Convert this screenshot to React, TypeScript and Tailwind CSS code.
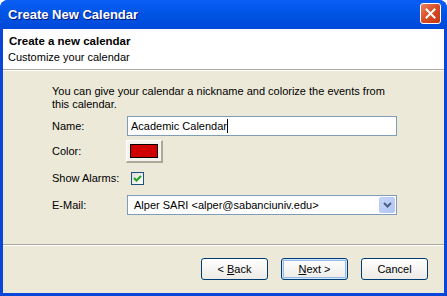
import React from 'react';

const font = { fontFamily: '"Liberation Sans", Arial, sans-serif' };

const XpButton: React.FC<{ children: React.ReactNode; primary?: boolean }> = ({ children, primary }) => (
  <button
    className={
      primary
        ? 'w-[67px] h-[22px] rounded-[3px] border border-[#003C74] bg-gradient-to-b from-[#FFFFFF] to-[#ECEBE6] text-[11px] text-black shadow-[inset_0_0_0_1px_#CEE7FF,inset_0_0_0_2px_#98B8EA]'
        : 'w-[67px] h-[22px] rounded-[3px] border border-[#003C74] bg-gradient-to-b from-[#FFFFFF] to-[#ECEBE6] text-[11px] text-black'
    }
  >
    {children}
  </button>
);

const App: React.FC = () => {
  return (
    <div className="w-[447px] h-[296px] flex flex-col bg-[#0A46D8] rounded-t-[8px] overflow-hidden" style={font}>
      {/* Title bar */}
      <div className="h-[29px] flex items-center justify-between pl-[8px] pr-[6px] bg-gradient-to-b from-[#0A5EF6] via-[#0054E3] to-[#0048DA]">
        <span className="text-white text-[13px] font-bold mt-[1px] [text-shadow:1px_1px_0_#0A1883]">Create New Calendar</span>
        <div className="w-[21px] h-[21px] rounded-[3px] border border-white bg-gradient-to-br from-[#E8815F] via-[#D84A22] to-[#C23A14] flex items-center justify-center mb-[3px]">
          <svg width="11" height="11" viewBox="0 0 11 11">
            <path d="M1.5 1.5 L9.5 9.5 M9.5 1.5 L1.5 9.5" stroke="white" strokeWidth="2" strokeLinecap="square" />
          </svg>
        </div>
      </div>

      <div className="flex-1 mx-[3px] mb-[3px] bg-[#ECE9D8] flex flex-col text-[11px] text-black">
        {/* Header */}
        <div className="h-[41px] bg-white pl-[6px] pt-[6px] border-b border-[#ACA899]">
          <div className="font-bold leading-[13px] text-[11.5px]">Create a new calendar</div>
          <div className="leading-[13px] mt-[3px] -ml-[1px]">Customize your calendar</div>
        </div>
        <div className="h-[1px] bg-white" />

        {/* Body */}
        <div className="flex-1 pl-[49px] pt-[14px]">
          <p className="w-[340px] leading-[13px]">
            You can give your calendar a nickname and colorize the events from this calendar.
          </p>

          <div className="mt-[5px] h-[20px] flex items-center">
            <span className="w-[75px]">Name:</span>
            <div className="w-[270px] h-[20px] border border-[#7F9DB9] bg-white flex items-center pl-[3px]">
              Academic Calendar<span className="w-[1px] h-[14px] bg-black" />
            </div>
          </div>

          <div className="mt-[4px] h-[23px] flex items-center">
            <span className="w-[74px]">Color:</span>
            <div className="w-[37px] h-[23px] bg-[#F4F3EE] border-t border-l border-white border-r-2 border-b-2 border-r-[#ACA899] border-b-[#ACA899] flex items-center justify-center">
              <div className="w-[28px] h-[14px] bg-[#D00000] border border-black" />
            </div>
          </div>

          <div className="mt-[5px] h-[21px] flex items-center">
            <span className="w-[79px]">Show Alarms:</span>
            <div className="w-[13px] h-[13px] border border-[#1C5180] bg-gradient-to-br from-[#DCDCD7] to-white flex items-center justify-center">
              <svg width="9" height="9" viewBox="0 0 9 9">
                <path d="M1 4 L3.5 6.5 L8 2" stroke="#21A121" strokeWidth="2" fill="none" />
              </svg>
            </div>
          </div>

          <div className="mt-[6px] h-[20px] flex items-center">
            <span className="w-[75px]">E-Mail:</span>
            <div className="w-[270px] h-[20px] border border-[#7F9DB9] bg-white flex items-center justify-between pl-[6px] pr-[1px]">
              <span>Alper SARI &lt;alper@sabanciuniv.edu&gt;</span>
              <div className="w-[16px] h-[16px] rounded-[2px] bg-gradient-to-br from-[#C6D3F7] to-[#B1C6F5] border border-[#B9CBF3] flex items-center justify-center">
                <svg width="9" height="6" viewBox="0 0 9 6">
                  <path d="M1 1 L4.5 4.5 L8 1" stroke="#4D6185" strokeWidth="2" fill="none" />
                </svg>
              </div>
            </div>
          </div>
        </div>

        {/* Footer */}
        <div className="h-[1px] bg-[#ACA899]" />
        <div className="h-[1px] bg-white" />
        <div className="h-[47px] flex justify-end items-start pt-[12px] pr-[16px] gap-[13px]">
          <XpButton>&lt; <u>B</u>ack</XpButton>
          <XpButton primary><u>N</u>ext &gt;</XpButton>
          <XpButton>Cancel</XpButton>
        </div>
      </div>
    </div>
  );
};

export default App;
